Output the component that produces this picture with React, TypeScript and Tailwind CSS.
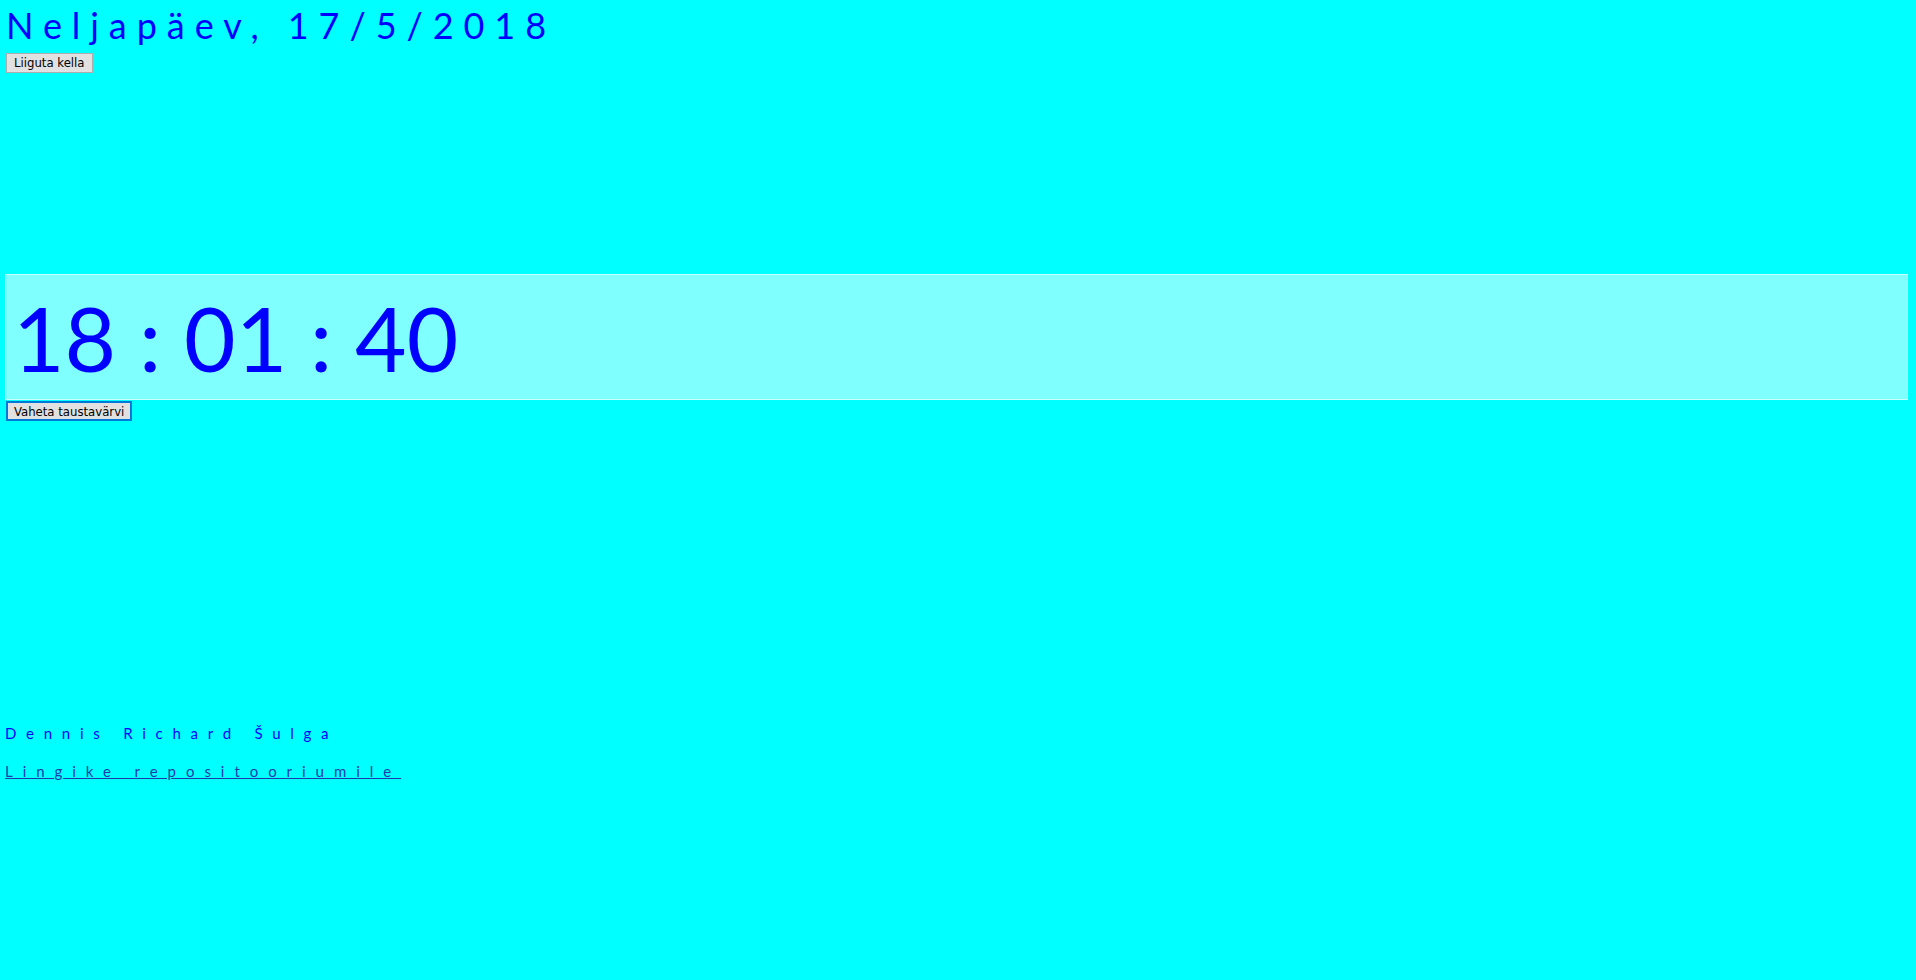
import React from "react";

export default function App() {
  return (
    <div className="min-h-[980px] w-full bg-[#00ffff] pt-[3px] px-[5px]">
      <h1 className="m-0 font-['Lato',sans-serif] text-[36px] leading-[44px] tracking-[9.95px] text-[#0000ff] font-normal pl-[1px]">
        Neljapäev, 17/5/2018
      </h1>
      <button className="block mt-[6px] ml-[1px] h-[20px] px-[7px] border border-[#adadad] bg-[#e1e1e1] text-[13px] leading-[16px] text-black font-['DejaVu_Sans_Condensed','DejaVu_Sans',sans-serif]">
        Liiguta kella
      </button>
      <div className="mt-[201px] h-[126px] w-[1903px] border border-[#c8ffff] bg-[#80ffff] flex items-center pl-[7px]">
        <span className="font-['Lato',sans-serif] text-[89px] leading-none text-[#0000ff] whitespace-pre">
          18 : 01 : 40
        </span>
      </div>
      <button className="block mt-[1px] ml-[1px] h-[20px] px-[6px] border-2 border-[#0078d7] bg-[#e1e1e1] text-[13px] leading-[15px] text-black font-['DejaVu_Sans_Condensed','DejaVu_Sans',sans-serif]">
        Vaheta taustavärvi
      </button>
      <p className="mt-[302px] m-0 font-['Lato',sans-serif] text-[15px] leading-[20px] tracking-[9.75px] text-[#0000ff]">
        Dennis Richard Šulga
      </p>
      <a href="#" className="block mt-[18px] w-fit font-['Lato',sans-serif] text-[15px] leading-[20px] tracking-[9.95px] text-[#1c3aa8] underline">
        Lingike repositooriumile
      </a>
    </div>
  );
}
